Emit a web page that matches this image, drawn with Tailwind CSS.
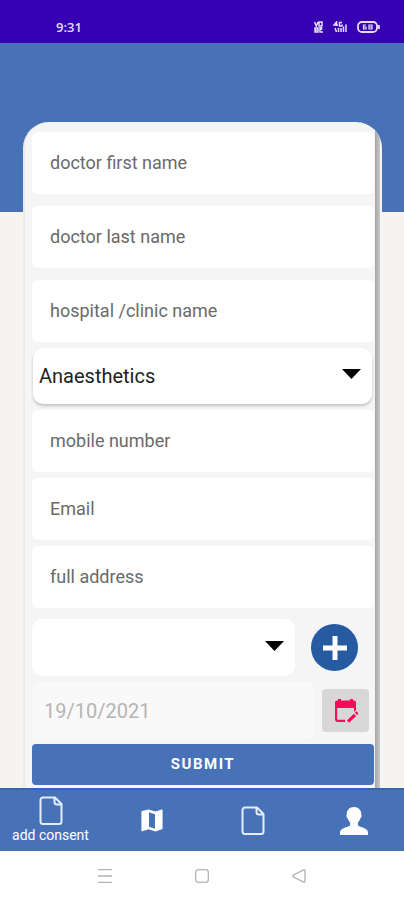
<!DOCTYPE html>
<html lang="en">
<head>
<meta charset="utf-8">
<meta name="viewport" content="width=device-width, initial-scale=1">
<title>Add consent</title>
<script src="https://cdn.jsdelivr.net/npm/@tailwindcss/browser@4"></script>
</head>
<body class="flex min-h-screen flex-col bg-[#f6f3f2] font-[Roboto,sans-serif]">
  <div class="flex h-[43px] shrink-0 items-end justify-between bg-[#3700b3] pr-6 pb-2 pl-14 text-[#e6dcfa]">
    <time class="font-['Open_Sans',sans-serif] text-[13px] leading-4 font-semibold">9:31</time>
    <div class="flex h-4 items-center gap-[10px]">
      <svg class="h-3 w-[9px]" viewBox="0 0 9 12" fill="none" stroke="currentColor" stroke-width="1.500" aria-label="VoLTE"><path d="M.6 1l1.700 4L4 1M5 1h3v4H5zM1 7h3v4H1zM6 6v5h3M1 9h3M7.500 6v3"/></svg>
      <svg class="h-3 w-[14px]" viewBox="0 0 14 12" fill="none" stroke="currentColor" stroke-width="1.500" aria-label="4G signal"><path d="M3.500 5V1L1 4h4M9 1.600H6.500V5H9V3.500M2 7l1.500 4M5.500 7v4M8 7v4M10.500 5.500V11M13 3.500V11"/></svg>
      <svg class="h-3 w-[23px]" viewBox="0 0 23 12" fill="none" stroke="currentColor" aria-label="Battery 68%"><rect x="1" y="1" width="19" height="10" rx="4" stroke-width="1.800"/><path d="M21.800 4v4" stroke-width="2"/><path d="M9 4H6.500v4H9V6H6.500M12 4h3v4h-3zM12 6h3" stroke-width="1.200"/></svg>
    </div>
  </div>

  <main class="flex flex-1 flex-col">
    <div class="h-[169px] shrink-0 bg-[#4872b8]"></div>
    <div class="mr-[22px] -mt-[90px] ml-[23px] flex flex-1 overflow-hidden rounded-t-[26px] border-l-2 border-[#ebebeb] bg-[#f5f5f5]">
      <form class="flex min-w-0 flex-1 flex-col pt-[10px] pr-px pb-[2px] pl-[7px]">
        <input aria-label="doctor first name" placeholder="doctor first name" class="h-[62px] w-full rounded-md bg-white px-[18px] pb-[2px] text-[18px] text-[#333] placeholder:text-[#6a6a6a]">
        <input aria-label="doctor last name" placeholder="doctor last name" class="mt-3 h-[62px] w-full rounded-md bg-white px-[18px] pb-[2px] text-[18px] text-[#333] placeholder:text-[#6a6a6a]">
        <input aria-label="hospital or clinic name" placeholder="hospital /clinic name" class="mt-3 h-[62px] w-full rounded-md bg-white px-[18px] pb-[2px] text-[18px] text-[#333] placeholder:text-[#6a6a6a]">
        <div class="relative mt-[6px] mr-[2px] ml-px">
          <select aria-label="Speciality" class="h-[56px] w-full appearance-none rounded-[10px] bg-white pr-10 pl-[6px] text-[20px] text-[#222] shadow-[0_2px_3px_rgba(0,0,0,0.2)]">
            <option>Anaesthetics</option>
          </select>
          <svg class="pointer-events-none absolute top-[21px] right-[11px] h-[10px] w-[19px]" viewBox="0 0 19 10" aria-hidden="true"><path d="M0 0h19L9.500 10z"/></svg>
        </div>
        <input type="tel" aria-label="mobile number" placeholder="mobile number" class="mt-[6px] h-[62px] w-full rounded-md bg-white px-[18px] pb-[2px] text-[18px] text-[#333] placeholder:text-[#6a6a6a]">
        <input type="email" aria-label="Email" placeholder="Email" class="mt-[6px] h-[62px] w-full rounded-md bg-white px-[18px] pb-[2px] text-[18px] text-[#333] placeholder:text-[#6a6a6a]">
        <input aria-label="full address" placeholder="full address" class="mt-[6px] h-[62px] w-full rounded-md bg-white px-[18px] pb-[2px] text-[18px] text-[#333] placeholder:text-[#6a6a6a]">
        <div class="mt-[11px] flex items-center gap-4 pr-4">
          <div class="relative flex-1">
            <select aria-label="Consent type" class="h-[57px] w-full appearance-none rounded-[10px] bg-white px-[6px] text-[20px]"><option></option></select>
            <svg class="pointer-events-none absolute top-[22px] right-[11px] h-[10px] w-[19px]" viewBox="0 0 19 10" aria-hidden="true"><path d="M0 0h19L9.500 10z"/></svg>
          </div>
          <button type="button" aria-label="Add" class="flex size-[47px] items-center justify-center rounded-full bg-[#265ba2]">
            <svg class="size-6" viewBox="0 0 24 24" fill="none" stroke="#fff" stroke-width="5"><path d="M12 0v24M0 12h24"/></svg>
          </button>
        </div>
        <div class="mt-[6px] flex items-center gap-2 pr-[5px]">
          <input aria-label="Date" value="19/10/2021" disabled class="h-[57px] min-w-0 flex-1 rounded-md bg-[#f9f9f9] px-3 text-[20px] text-[#b5b5b5]">
          <button type="button" aria-label="Pick date" class="flex h-[43px] w-[47px] items-center justify-center rounded-sm bg-[#d6d7d6]">
            <svg class="size-6" viewBox="0 0 24 24" aria-hidden="true"><path fill="#f50a5c" d="M3 1.500h1V0h3v1.500h9V0h3v1.500h1a2 2 0 0 1 2 2V9H1V3.500a2 2 0 0 1 2-2z"/><path fill="none" stroke="#f50a5c" stroke-width="2.200" d="M2.100 8v12a1.900 1.900 0 0 0 1.900 1.900h7"/><path fill="none" stroke="#f50a5c" stroke-width="3.200" d="M14 22.700l7-6.800M22 14.900l1.600-1.500"/><path fill="#f50a5c" d="M20 9h2v2l-2 2z"/></svg>
          </button>
        </div>
        <button type="submit" class="mt-[5px] h-[41px] w-full rounded-[4px] bg-[#4872b8] text-[15px] font-bold tracking-widest text-white">SUBMIT</button>
      </form>
      <div class="mr-[2px] w-[5px] bg-linear-to-r from-[#a5a5a5] to-[#c9c9c9]" aria-hidden="true"></div>
    </div>
  </main>

  <nav class="grid h-[63px] shrink-0 grid-cols-4 border-t-2 border-[#3564b0] bg-[#4872b8] text-white">
    <a href="#" class="flex flex-col items-center pt-[6px] text-[14px] leading-5 whitespace-nowrap">
      <svg class="h-[29px] w-6" viewBox="0 0 24 29" fill="none" stroke="#e4edfa" stroke-width="2" stroke-linejoin="round" aria-hidden="true"><path d="M4 1.500h12l6.500 6.500v17.500a2.500 2.500 0 0 1-2.500 2.500H4A2.500 2.500 0 0 1 1.500 25.500V4A2.500 2.500 0 0 1 4 1.500zM15.500 1.500V6A2.500 2.500 0 0 0 18 8.500h4.500"/></svg>
      add consent
    </a>
    <a href="#" aria-label="Map" class="flex items-center justify-center">
      <svg class="h-[23px] w-[22px]" viewBox="0 0 22 23" fill="#fff" aria-hidden="true"><path fill-rule="evenodd" d="M1 2l6.500-1.500 7 2L20.700.600c.5-.2.900 0 .9.600v18c0 .5-.2.900-.7 1l-6.400 2.300-7-2.300-6.200 2c-.6.200-.9 0-.9-.6V3c0-.5.200-.8.600-1zM8 3.300v14.400l6 2V5.300z"/></svg>
    </a>
    <a href="#" aria-label="Documents" class="flex items-center justify-center">
      <svg class="h-[29px] w-6" viewBox="0 0 24 29" fill="none" stroke="#e4edfa" stroke-width="2" stroke-linejoin="round" aria-hidden="true"><path d="M4 1.500h12l6.500 6.500v17.500a2.500 2.500 0 0 1-2.500 2.500H4A2.500 2.500 0 0 1 1.500 25.500V4A2.500 2.500 0 0 1 4 1.500zM15.500 1.500V6A2.500 2.500 0 0 0 18 8.500h4.500"/></svg>
    </a>
    <a href="#" aria-label="Profile" class="flex items-center justify-center">
      <svg class="h-[28px] w-7" viewBox="0 0 28 28" fill="#fff" aria-hidden="true"><path d="M14 0c4.200 0 7.200 2.800 7.200 6.800 0 1 .5 1.200.4 2.400-.1 1-.8 1.300-1.100 2.100-.5 1.600-1.400 3-2.600 4.100v2.400c0 1 1 1.400 2.500 1.900 4.500 1.500 7.600 2.500 7.600 6V28H0v-2.300c0-3.500 3.100-4.500 7.600-6 1.500-.5 2.500-.9 2.500-1.900v-2.400c-1.200-1.100-2.100-2.500-2.600-4.100-.3-.8-1-1.100-1.100-2.100-.1-1.200.4-1.400.4-2.400C6.800 2.800 9.800 0 14 0z"/></svg>
    </a>
  </nav>

  <div class="flex h-[49px] shrink-0 items-center justify-center gap-[83px] bg-white text-[#b3b3b3]">
    <button type="button" aria-label="Recent apps"><svg class="h-[14px] w-[14px]" viewBox="0 0 14 14" fill="none" stroke="currentColor" stroke-width="1.300"><path d="M0 .7h14M0 7h14M0 13.300h14"/></svg></button>
    <button type="button" aria-label="Home"><svg class="h-[14px] w-[14px]" viewBox="0 0 14 14" fill="none" stroke="currentColor" stroke-width="1.300"><rect x=".7" y=".7" width="12.600" height="12.600" rx="2.500"/></svg></button>
    <button type="button" aria-label="Back"><svg class="h-[14px] w-[14px]" viewBox="0 0 14 14" fill="none" stroke="currentColor" stroke-width="1.300" stroke-linejoin="round"><path d="M1.300 6.200L11.500.900c.9-.4 1.500 0 1.500.8v10.600c0 .8-.6 1.200-1.500.8L1.300 7.800c-.8-.4-.8-1.200 0-1.600z"/></svg></button>
  </div>
</body>
</html>
